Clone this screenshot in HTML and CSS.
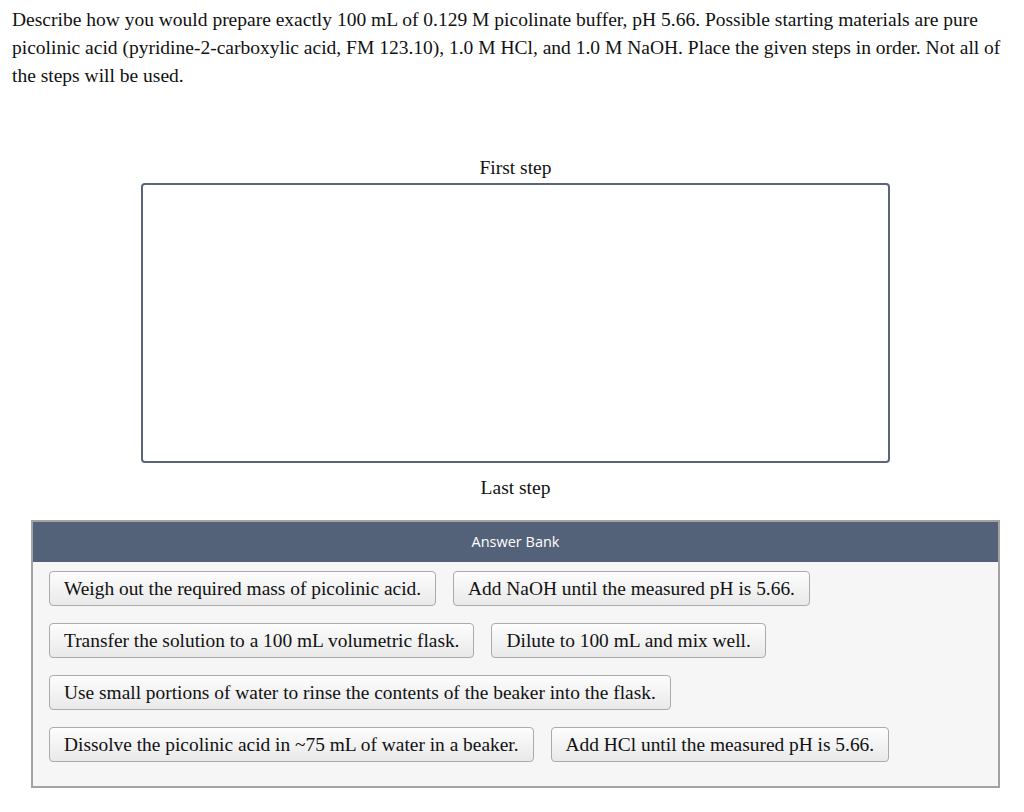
FILE: index.html
```html
<!DOCTYPE html>
<html>
<head>
  <title>Picolinate Buffer</title>
  <link rel="stylesheet" href="styles.css">
</head>
<body>

  <p class="question">Describe how you would prepare exactly 100 mL of 0.129 M picolinate buffer, pH 5.66. Possible starting materials are pure picolinic acid (pyridine-2-carboxylic acid, FM 123.10), 1.0 M HCl, and 1.0 M NaOH. Place the given steps in order. Not all of the steps will be used.</p>

  <div class="ranking">
    <div class="label">First step</div>
    <div class="dropzone"></div>
    <div class="label">Last step</div>
  </div>

  <div class="bank">
    <div class="bank-title">Answer Bank</div>
    <div class="bank-items">
      <button class="item">Weigh out the required mass of picolinic acid.</button>
      <button class="item">Add NaOH until the measured pH is 5.66.</button>
      <button class="item">Transfer the solution to a 100 mL volumetric flask.</button>
      <button class="item">Dilute to 100 mL and mix well.</button>
      <button class="item">Use small portions of water to rinse the contents of the beaker into the flask.</button>
      <button class="item">Dissolve the picolinic acid in ~75 mL of water in a beaker.</button>
      <button class="item">Add HCl until the measured pH is 5.66.</button>
    </div>
  </div>

</body>
</html>
```

FILE: styles.css
```css
body {
  margin: 0;
  padding: 0 12px;
  font-family: "Liberation Serif", "Times New Roman", serif;
  font-size: 19.5px;
  color: #111;
  background: #fff;
}
.question {
  margin: 6px 0 0;
  line-height: 28px;
}
.ranking {
  margin: 66px 0 0 7px;
  display: flex;
  flex-direction: column;
  align-items: center;
}
.label {
  line-height: 24px;
}
.dropzone {
  width: 745px;
  height: 276px;
  margin: 3px 0 13px;
  border: 2px solid #5a6579;
  border-radius: 4px;
}
.bank {
  margin: 20px 12px 0 19px;
  border: 2px solid #a3a3a3;
  background: #f6f6f6;
}
.bank-title {
  background: #536278;
  color: #fff;
  font-family: "Open Sans", "Noto Sans", sans-serif;
  font-size: 14.5px;
  text-align: center;
  height: 40px;
  line-height: 40px;
}
.bank-items {
  display: flex;
  flex-wrap: wrap;
  gap: 17px 17px;
  padding: 9px 16px 24px;
}
.item {
  font-family: "Liberation Serif", "Times New Roman", serif;
  font-size: 19.4px;
  color: #111;
  height: 35px;
  padding: 0 14px;
  border: 1px solid #ababab;
  border-radius: 4px;
  background: linear-gradient(#fdfdfd, #e9e9e9);
}
```
